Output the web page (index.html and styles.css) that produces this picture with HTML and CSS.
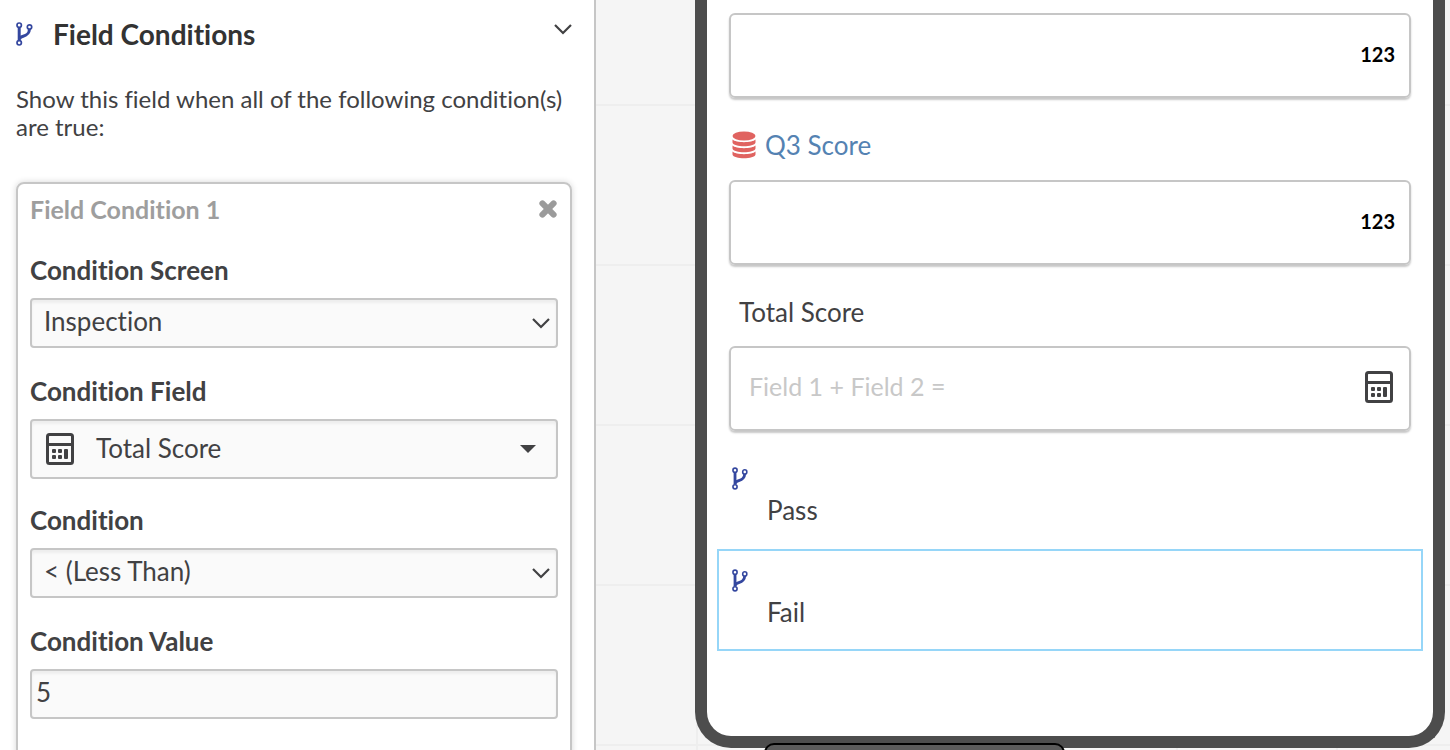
FILE: index.html
```html
<!DOCTYPE html>
<html lang="en">
<head>
<meta charset="utf-8">
<title>Field Conditions</title>
<link rel="stylesheet" href="styles.css">
</head>
<body>
<svg class="sprite" aria-hidden="true">
  <symbol id="branch" viewBox="0 0 18 24">
    <path d="M3.2 5.5v13" fill="none" stroke="currentColor" stroke-width="3"/>
    <path d="M3.500 17.500c0-5 9.500-1 10-10.500" fill="none" stroke="currentColor" stroke-width="3"/>
    <circle cx="3.200" cy="3.200" r="2.200" fill="#fff" stroke="currentColor" stroke-width="1.700"/>
    <circle cx="13.500" cy="5" r="2.200" fill="#fff" stroke="currentColor" stroke-width="1.700"/>
    <circle cx="3.200" cy="20.800" r="2.200" fill="#fff" stroke="currentColor" stroke-width="1.700"/>
  </symbol>
  <symbol id="calculator" viewBox="0 0 28 32">
    <rect x="1.500" y="1.500" width="25" height="29" rx="2" fill="none" stroke="currentColor" stroke-width="3"/>
    <path d="M2 11.500h24" stroke="currentColor" stroke-width="3"/>
    <g fill="currentColor">
      <rect x="6" y="16" width="4" height="4" rx="1"/>
      <rect x="12" y="16" width="4" height="4" rx="1"/>
      <rect x="6" y="22" width="4" height="4" rx="1"/>
      <rect x="12" y="22" width="4" height="4" rx="1"/>
      <rect x="18" y="16" width="4" height="10" rx="1"/>
    </g>
  </symbol>
  <symbol id="chevron" viewBox="0 0 18 12">
    <path d="M1 2l8 8 8-8" fill="none" stroke="currentColor" stroke-width="2.200"/>
  </symbol>
</svg>
<div class="builder">
  <aside class="sidebar">
    <header class="section-head">
      <svg class="branch-icon branch-large"><use href="#branch"/></svg>
      <h2 class="section-title">Field Conditions</h2>
      <button class="icon-button" type="button" aria-label="Collapse section"><svg class="chevron"><use href="#chevron"/></svg></button>
    </header>
    <p class="intro">Show this field when all of the following condition(s) are true:</p>
    <section class="card">
      <div class="card-head">
        <h3 class="card-title">Field Condition 1</h3>
        <button class="icon-button remove" type="button" aria-label="Remove condition">
          <svg class="cross" viewBox="0 0 18 18"><path d="M4 4l10 10M14 4L4 14" stroke="currentColor" stroke-width="5.500" stroke-linecap="round"/></svg>
        </button>
      </div>
      <div class="form-row">
        <label class="form-label" for="screen">Condition Screen</label>
        <div class="select-wrap">
          <select class="control" id="screen"><option>Inspection</option></select>
          <svg class="chevron select-arrow"><use href="#chevron"/></svg>
        </div>
      </div>
      <div class="form-row">
        <label class="form-label" for="field">Condition Field</label>
        <button class="control picker" id="field" type="button">
          <svg class="calc-icon"><use href="#calculator"/></svg>
          <span class="picker-text">Total Score</span>
          <svg class="caret" viewBox="0 0 16 8"><path d="M0 0h16l-8 8z" fill="currentColor"/></svg>
        </button>
      </div>
      <div class="form-row after-picker">
        <label class="form-label" for="condition">Condition</label>
        <div class="select-wrap">
          <select class="control" id="condition"><option>&lt; (Less Than)</option></select>
          <svg class="chevron select-arrow"><use href="#chevron"/></svg>
        </div>
      </div>
      <div class="form-row">
        <label class="form-label" for="value">Condition Value</label>
        <input class="control value" id="value" type="text" value="5">
      </div>
    </section>
  </aside>
  <main class="canvas">
    <div class="phone">
      <div class="item">
        <div class="input-box"><input class="field-input" type="text" aria-label="Q2 Score"><span class="number-mark">123</span></div>
      </div>
      <div class="item">
        <label class="field-label linked" for="q3">
          <svg class="database" viewBox="0 0 24 28" fill="currentColor">
            <ellipse cx="12" cy="5" rx="11.500" ry="4.500"/>
            <path d="M.5 8.500c3 3.500 20 3.500 23 0v3c-1 5-22 5-23 0z"/>
            <path d="M.5 14.500c3 3.500 20 3.500 23 0v3c-1 5-22 5-23 0z"/>
            <path d="M.5 20.500c3 3.500 20 3.500 23 0v3c-1 5-22 5-23 0z"/>
          </svg>
          Q3 Score</label>
        <div class="input-box"><input class="field-input" id="q3" type="text"><span class="number-mark">123</span></div>
      </div>
      <div class="item">
        <label class="field-label plain" for="total">Total Score</label>
        <div class="input-box"><input class="field-input" id="total" type="text" placeholder="Field 1 + Field 2 ="><svg class="calc-icon"><use href="#calculator"/></svg></div>
      </div>
      <div class="outcomes">
        <div class="outcome">
          <svg class="branch-icon"><use href="#branch"/></svg>
          <p class="outcome-text">Pass</p>
        </div>
        <div class="outcome selected">
          <svg class="branch-icon"><use href="#branch"/></svg>
          <p class="outcome-text">Fail</p>
        </div>
      </div>
      <div class="dock"></div>
    </div>
  </main>
</div>
</body>
</html>
```
FILE: styles.css
```css
* { box-sizing: border-box; }
body {
  margin: 0;
  color: #414143;
  background: #fff;
  font: 24px/30px Lato, "Open Sans", sans-serif;
  font-variant-ligatures: none;
}
h2, h3, p { margin: 0; }
svg { display: block; flex: none; }
button, input, select { font: inherit; font-variant-ligatures: none; color: inherit; }
.sprite { position: absolute; width: 0; height: 0; }
.builder {
  display: grid;
  grid-template-columns: 596fr 854fr;
  height: 100vh;
  overflow: hidden;
}
.sidebar {
  padding: 19px 22px 0 16px;
  border-right: 2px solid #c6c6c6;
}
.section-head { display: flex; align-items: flex-start; }
.section-title {
  flex: 1;
  margin-left: 19px;
  color: #333;
  font-size: 28px;
  line-height: 30px;
}
.icon-button {
  padding: 0;
  border: 0;
  background: none;
  cursor: pointer;
}
.section-head .icon-button { margin-top: 4px; }
.branch-icon { width: 17px; height: 23px; color: #34479f; }
.branch-large { width: 18px; height: 24px; margin-top: 3px; }
.chevron { width: 18px; height: 12px; }
.intro { margin-top: 36px; font-size: 24px; line-height: 28px; }
.card {
  margin-top: 41px;
  padding: 10px 12px 40px;
  border: 2px solid #c6c6c6;
  border-radius: 8px;
  box-shadow: 0 0 6px rgba(0, 0, 0, 0.16);
}
.card-head { display: flex; justify-content: space-between; align-items: center; }
.card-title { color: #9e9e9e; font-size: 25px; }
.remove { color: #9b9b9b; }
.cross { width: 20px; height: 20px; }
.form-row { margin-top: 28px; }
.after-picker { margin-top: 26px; }
.card-head + .form-row { margin-top: 31px; }
.form-label { display: block; margin-bottom: 13px; font-size: 26px; font-weight: 700; }
.select-wrap { position: relative; }
.control {
  display: block;
  width: 100%;
  height: 50px;
  padding: 0 40px 4px 12px;
  border: 2px solid #c6c6c6;
  border-radius: 4px;
  background: #fafafa;
  box-shadow: inset 0 3px 3px rgba(0, 0, 0, 0.05);
  font-size: 26px;
  appearance: none;
}
.value { padding: 0 4px 5px; }
.select-arrow { position: absolute; right: 8px; top: 19px; pointer-events: none; }
.picker {
  display: flex;
  align-items: center;
  height: 60px;
  padding: 0 20px 0 14px;
  text-align: left;
}
.calc-icon { width: 28px; height: 32px; color: #414143; }
.picker-text { flex: 1; margin-left: 22px; padding-bottom: 2px; }
.caret { width: 16px; height: 8px; }
.canvas {
  padding: 0 5px 0 99px;
  background-color: #f5f5f5;
  background-image:
    linear-gradient(#eee 2px, transparent 2px),
    linear-gradient(90deg, #eee 2px, transparent 2px);
  background-position: 100px 104px;
  background-size: 160px 160px;
}
.phone {
  position: relative;
  padding: 13px 10px 85px;
  border: 12px solid #4d4d4d;
  border-top: 0;
  border-radius: 0 0 36px 36px;
  background: #fff;
}
.item { padding: 0 12px; }
.input-box {
  display: flex;
  align-items: center;
  height: 85px;
  padding: 0 14px 3px 18px;
  border: 2px solid #c6c6c6;
  border-radius: 6px;
  box-shadow: 0 2px 2px rgba(0, 0, 0, 0.22);
}
.item .calc-icon { margin-right: 2px; }
.field-input {
  flex: 1;
  min-width: 0;
  padding: 0 0 2px;
  border: 0;
  outline: 0;
  background: none;
  font-size: 25px;
}
.field-input::placeholder { color: #c8c8c8; opacity: 1; }
.number-mark { color: #000; font-size: 20px; font-weight: 700; }
.field-label {
  display: flex;
  align-items: center;
  height: 82px;
  padding-top: 12px;
  font-size: 26px;
}
.linked { gap: 9px; padding-left: 3px; color: #5482b2; }
.plain { height: 81px; padding-left: 10px; }
.database { width: 24px; height: 28px; color: #e06360; }
.outcomes { margin-top: 16px; }
.outcome {
  height: 102px;
  padding: 18px 12px 0 13px;
  border: 2px solid transparent;
}
.selected { border-color: #96d6f8; }
.outcome-text { margin: 5px 0 0 35px; font-size: 26px; }
.dock {
  position: absolute;
  left: 57px;
  bottom: -47px;
  width: 301px;
  height: 40px;
  border: 2px solid #000;
  border-radius: 10px;
  background: #5b5b5b;
}
```
